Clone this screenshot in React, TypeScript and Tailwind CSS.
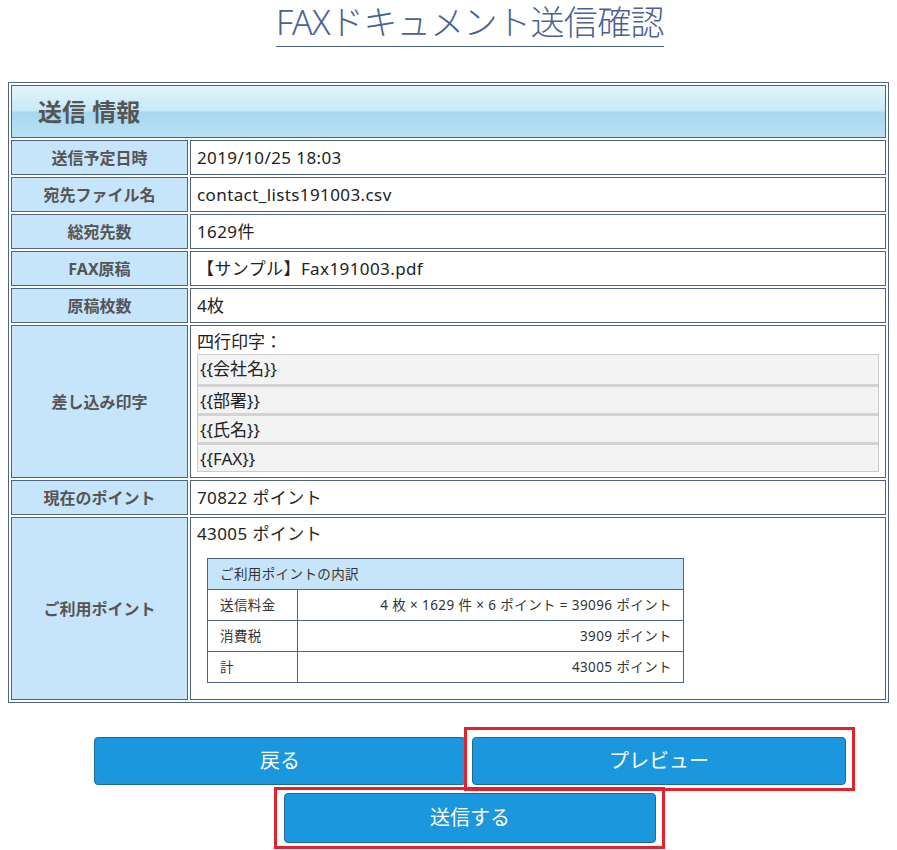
import React from 'react';

const rows: { label: string; value: string }[] = [
  { label: '送信予定日時', value: '2019/10/25 18:03' },
  { label: '宛先ファイル名', value: 'contact_lists191003.csv' },
  { label: '総宛先数', value: '1629件' },
  { label: 'FAX原稿', value: '【サンプル】Fax191003.pdf' },
  { label: '原稿枚数', value: '4枚' },
];

const mergeFields = ['{{会社名}}', '{{部署}}', '{{氏名}}', '{{FAX}}'];

const breakdown = [
  { label: '送信料金', value: '4 枚 × 1629 件 × 6 ポイント = 39096 ポイント' },
  { label: '消費税', value: '3909 ポイント' },
  { label: '計', value: '43005 ポイント' },
];

const labelCls =
  'w-[177px] border border-[#4d6580] bg-[#c6e4fa] text-center align-middle text-[16px] font-bold text-[#555]';
const valueCls =
  'border border-[#4d6580] bg-white pl-[6px] align-middle text-[17px] tracking-[0.4px] text-[#222]';

export default function App() {
  return (
    <div
      className="min-h-[850px] bg-white px-2 text-[#222]"
      style={{ fontFamily: '"Noto Sans", "Noto Sans CJK JP", sans-serif' }}
    >
      <div className="pl-[43px] text-center">
        <h1 className="inline-block border-b border-[#4a6390] pb-[2px] text-[34px] leading-[44px] font-light tracking-[-0.6px] text-[#4a6390]">
          FAXドキュメント送信確認
        </h1>
      </div>

      <table className="mt-[35px] w-full border-separate border-spacing-[2px] border border-[#4d6580]">
        <tbody>
          <tr>
            <td
              colSpan={2}
              className="h-[53px] border border-[#4d6580] pl-[26px] align-middle text-[24px] font-bold text-[#555]"
              style={{
                background:
                  'linear-gradient(to bottom, #e2f4fc 0%, #c8e9f7 48%, #a7d8ef 52%, #b9e1f4 100%)',
              }}
            >
              送信 情報
            </td>
          </tr>
          {rows.map((r) => (
            <tr key={r.label} className="h-[35px]">
              <td className={labelCls}>{r.label}</td>
              <td className={valueCls}>{r.value}</td>
            </tr>
          ))}
          <tr>
            <td className={labelCls}>差し込み印字</td>
            <td className="border border-[#4d6580] bg-white px-[6px] pt-[4px] pb-[5px] align-top text-[17px] text-[#222]">
              <div className="leading-[24px]">四行印字：</div>
              <div className="flex flex-col border border-[#cccccc] bg-[#f3f3f3]">
                {mergeFields.map((f, i) => (
                  <div
                    key={f}
                    className={`h-[29px] pl-[2px] leading-[27px] ${i > 0 ? 'border-t-[3px] border-[#d3d3d3]' : ''}`}
                  >
                    {f}
                  </div>
                ))}
              </div>
            </td>
          </tr>
          <tr className="h-[35px]">
            <td className={labelCls}>現在のポイント</td>
            <td className={valueCls}>70822 ポイント</td>
          </tr>
          <tr>
            <td className={labelCls}>ご利用ポイント</td>
            <td className="border border-[#4d6580] bg-white pt-[4px] pr-[7px] pb-[16px] pl-[6px] align-top text-[17px] tracking-[0.4px] text-[#222]">
              <div className="leading-[24px]">43005 ポイント</div>
              <table className="mt-[12px] ml-[10px] w-[477px] border-collapse border border-[#4d6580] text-[13.5px] tracking-[0.4px] text-[#333]">
                <tbody>
                  <tr className="h-[31px]">
                    <td colSpan={2} className="border border-[#4d6580] bg-[#c6e4fa] pl-[12px] align-middle">
                      ご利用ポイントの内訳
                    </td>
                  </tr>
                  {breakdown.map((b) => (
                    <tr key={b.label} className="h-[31px]">
                      <td className="w-[90px] border border-[#4d6580] pl-[12px] align-middle">{b.label}</td>
                      <td className="border border-[#4d6580] pr-[11px] text-right align-middle">{b.value}</td>
                    </tr>
                  ))}
                </tbody>
              </table>
            </td>
          </tr>
        </tbody>
      </table>

      <div className="mt-[34px] ml-[86px] flex w-[752px] flex-col items-center gap-[8px]">
        <div className="flex gap-[6px]">
          <button className="h-[48px] w-[372px] rounded-[4px] border border-[#1b6a99] bg-[#1a97dd] text-[20px] text-white">
            戻る
          </button>
          <div className="relative">
            <button className="h-[48px] w-[374px] rounded-[4px] border border-[#1b6a99] bg-[#1a97dd] text-[20px] text-white">
              プレビュー
            </button>
            <div className="pointer-events-none absolute -top-[10px] -right-[9px] -bottom-[6px] -left-[8px] border-[3px] border-[#e3222b]" />
          </div>
        </div>
        <div className="relative">
          <button className="h-[50px] w-[372px] rounded-[4px] border border-[#1b6a99] bg-[#1a97dd] text-[20px] text-white">
            送信する
          </button>
          <div className="pointer-events-none absolute -top-[6px] -right-[9px] -bottom-[6px] -left-[10px] border-[3px] border-[#e3222b]" />
        </div>
      </div>
    </div>
  );
}
